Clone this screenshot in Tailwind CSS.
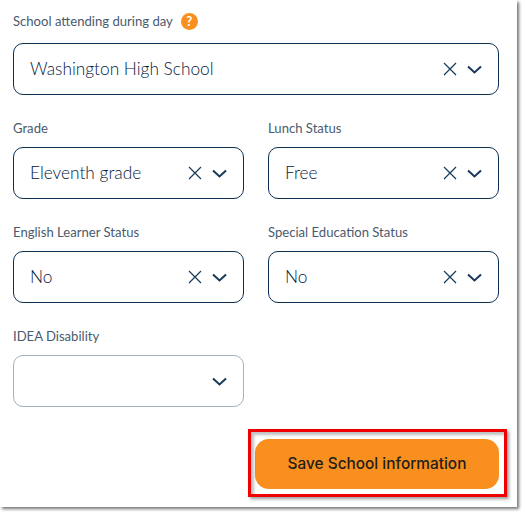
<!DOCTYPE html>
<html lang="en">
<head>
    <meta charset="UTF-8">
    <title>School information</title>
    <script src="https://cdn.jsdelivr.net/npm/@tailwindcss/browser@4"></script>
</head>
<body class="bg-white w-[525px] h-[516px] overflow-hidden font-['Lato',sans-serif]">
    <div class="relative w-[517px] h-[507px] bg-white px-[13px] pt-[12px] shadow-[2px_2px_3px_rgba(0,0,0,0.55)]">

        <div class="flex items-center gap-[8px] h-[19px] text-[13.1px] text-[#4a5a6e]">
            <span>School attending during day</span>
            <span class="flex items-center justify-center w-[17px] h-[17px] rounded-full bg-[#f98f1e] text-white text-[13px] font-bold">?</span>
        </div>
        <div class="mt-[12px] w-[486px] h-[52px] flex items-center pl-[16px] pr-[16px] rounded-[10px] border border-[#0b2f52] text-[17.3px] font-light text-[#04203c]">
            <span class="flex-1">Washington High School</span>
            <svg class="w-[14px] h-[14px] mr-[10px]" viewBox="0 0 14 14" fill="none" stroke="#17385a" stroke-width="1.2"><path d="M1 1l12 12M13 1L1 13"/></svg>
            <svg class="w-[15px] h-[9px]" viewBox="0 0 15 9" fill="none" stroke="#17385a" stroke-width="2"><path d="M1 1.5l6.5 6 6.5-6"/></svg>
        </div>

        <div class="grid grid-cols-2 gap-x-[24px] gap-y-[24px] w-[486px] mt-[24px]">
            <div>
                <div class="h-[19px] text-[13.1px] leading-[19px] text-[#4a5a6e] mb-[9px]">Grade</div>
                <div class="h-[52px] flex items-center pl-[16px] pr-[16px] rounded-[10px] border border-[#0b2f52] text-[17.3px] font-light text-[#04203c]">
                    <span class="flex-1">Eleventh grade</span>
                    <svg class="w-[14px] h-[14px] mr-[10px]" viewBox="0 0 14 14" fill="none" stroke="#17385a" stroke-width="1.2"><path d="M1 1l12 12M13 1L1 13"/></svg>
                    <svg class="w-[15px] h-[9px]" viewBox="0 0 15 9" fill="none" stroke="#17385a" stroke-width="2"><path d="M1 1.5l6.5 6 6.5-6"/></svg>
                </div>
            </div>
            <div>
                <div class="h-[19px] text-[13.1px] leading-[19px] text-[#4a5a6e] mb-[9px]">Lunch Status</div>
                <div class="h-[52px] flex items-center pl-[16px] pr-[16px] rounded-[10px] border border-[#0b2f52] text-[17.3px] font-light text-[#04203c]">
                    <span class="flex-1">Free</span>
                    <svg class="w-[14px] h-[14px] mr-[10px]" viewBox="0 0 14 14" fill="none" stroke="#17385a" stroke-width="1.2"><path d="M1 1l12 12M13 1L1 13"/></svg>
                    <svg class="w-[15px] h-[9px]" viewBox="0 0 15 9" fill="none" stroke="#17385a" stroke-width="2"><path d="M1 1.5l6.5 6 6.5-6"/></svg>
                </div>
            </div>
            <div>
                <div class="h-[19px] text-[13.1px] leading-[19px] text-[#4a5a6e] mb-[9px]">English Learner Status</div>
                <div class="h-[52px] flex items-center pl-[16px] pr-[16px] rounded-[10px] border border-[#0b2f52] text-[17.3px] font-light text-[#04203c]">
                    <span class="flex-1">No</span>
                    <svg class="w-[14px] h-[14px] mr-[10px]" viewBox="0 0 14 14" fill="none" stroke="#17385a" stroke-width="1.2"><path d="M1 1l12 12M13 1L1 13"/></svg>
                    <svg class="w-[15px] h-[9px]" viewBox="0 0 15 9" fill="none" stroke="#17385a" stroke-width="2"><path d="M1 1.5l6.5 6 6.5-6"/></svg>
                </div>
            </div>
            <div>
                <div class="h-[19px] text-[13.1px] leading-[19px] text-[#4a5a6e] mb-[9px]">Special Education Status</div>
                <div class="h-[52px] flex items-center pl-[16px] pr-[16px] rounded-[10px] border border-[#0b2f52] text-[17.3px] font-light text-[#04203c]">
                    <span class="flex-1">No</span>
                    <svg class="w-[14px] h-[14px] mr-[10px]" viewBox="0 0 14 14" fill="none" stroke="#17385a" stroke-width="1.2"><path d="M1 1l12 12M13 1L1 13"/></svg>
                    <svg class="w-[15px] h-[9px]" viewBox="0 0 15 9" fill="none" stroke="#17385a" stroke-width="2"><path d="M1 1.5l6.5 6 6.5-6"/></svg>
                </div>
            </div>
            <div>
                <div class="h-[19px] text-[13.1px] leading-[19px] text-[#4a5a6e] mb-[9px]">IDEA Disability</div>
                <div class="h-[52px] flex items-center justify-end pr-[16px] rounded-[10px] border border-[#a3b1c0]">
                    <svg class="w-[15px] h-[9px]" viewBox="0 0 15 9" fill="none" stroke="#17385a" stroke-width="2"><path d="M1 1.5l6.5 6 6.5-6"/></svg>
                </div>
            </div>
        </div>

        <div class="flex justify-end w-[486px] mt-[32px]">
            <button class="w-[244px] h-[50px] rounded-[14px] bg-[#f98f1e] text-[15.4px] font-medium text-[#1f1e1a] font-['Inter',sans-serif]">Save School information</button>
        </div>

        <!-- red annotation box drawn over the screenshot -->
        <div class="absolute left-[248px] top-[429px] w-[259px] h-[68px] border-[3px] border-[#f00000] shadow-[inset_3px_3px_3px_rgba(0,0,0,0.25),2px_2px_3px_rgba(0,0,0,0.4)]"></div>
    </div>
</body>
</html>
